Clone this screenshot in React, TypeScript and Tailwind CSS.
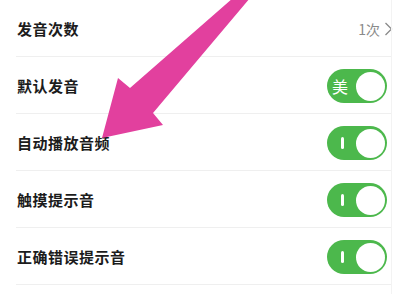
import React from "react";

type Row = { label: string; kind: "value" | "toggle"; badge?: string };

const rows: Row[] = [
  { label: "发音次数", kind: "value" },
  { label: "默认发音", kind: "toggle", badge: "美" },
  { label: "自动播放音频", kind: "toggle" },
  { label: "触摸提示音", kind: "toggle" },
  { label: "正确错误提示音", kind: "toggle" },
];

function Toggle({ badge }: { badge?: string }) {
  return (
    <div
      className={`flex h-[34px] w-[60px] items-center justify-between rounded-full bg-[#4cb84c] pr-[2px] ${
        badge ? "pl-[5px]" : "pl-[9px]"
      }`}
    >
      {badge ? (
        <span className="text-[16px] leading-none text-white">{badge}</span>
      ) : (
        <span className="ml-[5px] h-[12px] w-[3px] rounded-sm bg-white" />
      )}
      <span className="h-[29px] w-[29px] rounded-full bg-white" />
    </div>
  );
}

export default function App() {
  return (
    <div
      className="relative h-[294px] w-[400px] overflow-hidden bg-white"
      style={{ fontFamily: '"Noto Sans CJK SC", "Noto Sans", sans-serif' }}
    >
      <div className="flex flex-col pr-[9px]">
        {rows.map((r, i) => (
          <div key={r.label} className={i === 0 ? "" : "border-t border-[#efefef] ml-4"}>
            <div className={`flex h-[56px] items-center justify-between pt-[2px] ${i === 0 ? "h-[55px] pl-[17px]" : "pl-[1px]"}`}>
              <span className="text-[15px] font-bold tracking-[0.5px] text-[#1c1c1c]">{r.label}</span>
              {r.kind === "value" ? (
                <span className="mr-[-2px] flex items-center gap-[4px] text-[14px] text-[#8a8a8a]">
                  1次
                  <svg width="9" height="14" viewBox="0 0 9 14" fill="none" stroke="#8a8a8a" strokeWidth="1.3">
                    <path d="M1.5 1 L7.5 7 L1.5 13" />
                  </svg>
                </span>
              ) : (
                <div className="mr-[4px]">
                  <Toggle badge={r.badge} />
                </div>
              )}
            </div>
          </div>
        ))}
        <div className="ml-4 border-t border-[#efefef]" />
      </div>
      <div className="absolute right-[8px] top-0 h-full w-px bg-[#f3f3f3]" />
      <svg className="pointer-events-none absolute left-0 top-0" width="400" height="294">
        <polygon
          points="233,-2 130,88 118,78 102,138 163,125 153,113 250,-2"
          fill="#e2409e"
        />
      </svg>
    </div>
  );
}
